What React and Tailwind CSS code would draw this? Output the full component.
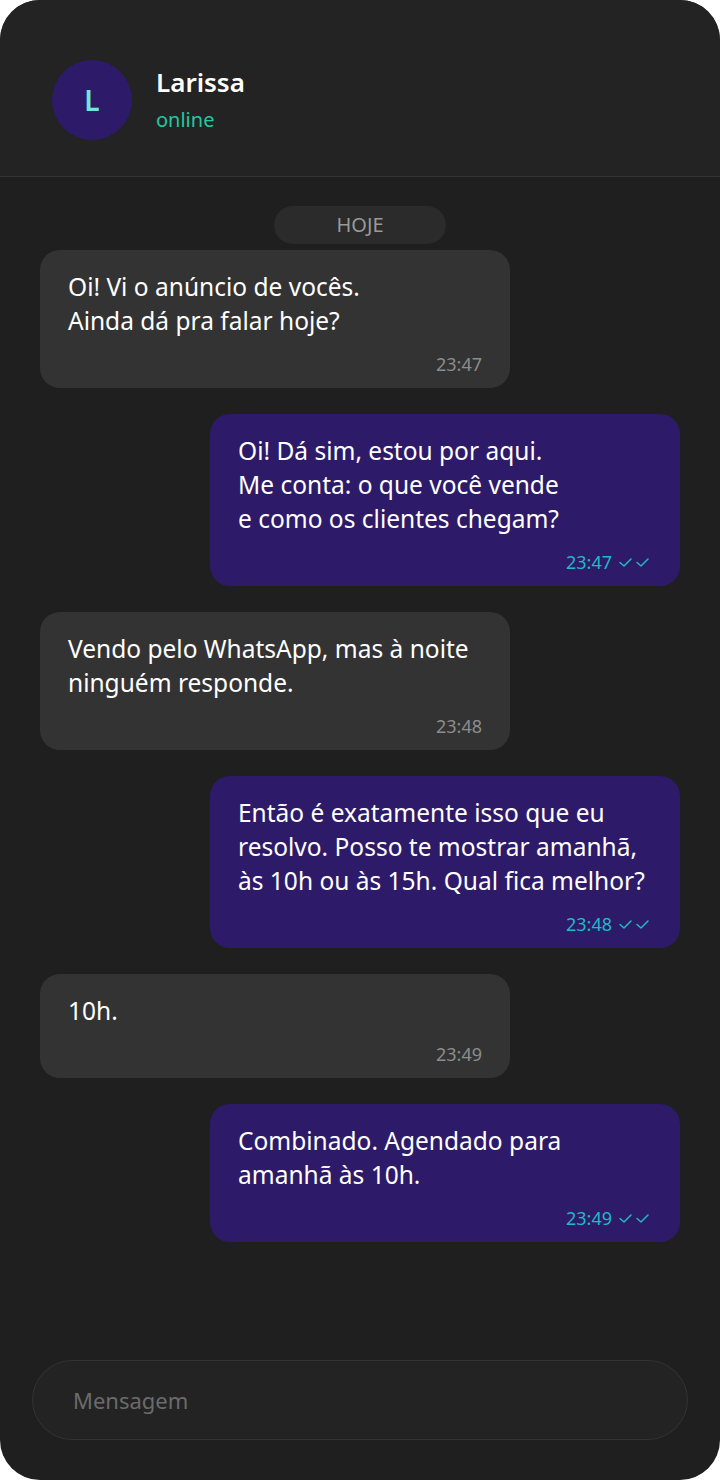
import React from 'react'

const messages = [
  { id: 1, mine: false, text: 'Oi! Vi o anúncio de vocês.\nAinda dá pra falar hoje?', time: '23:47' },
  { id: 2, mine: true, text: 'Oi! Dá sim, estou por aqui.\nMe conta: o que você vende\ne como os clientes chegam?', time: '23:47' },
  { id: 3, mine: false, text: 'Vendo pelo WhatsApp, mas à noite\nninguém responde.', time: '23:48' },
  { id: 4, mine: true, text: 'Então é exatamente isso que eu\nresolvo. Posso te mostrar amanhã,\nàs 10h ou às 15h. Qual fica melhor?', time: '23:48' },
  { id: 5, mine: false, text: '10h.', time: '23:49' },
  { id: 6, mine: true, text: 'Combinado. Agendado para\namanhã às 10h.', time: '23:49' },
]

function DoubleCheck(){
  return (
    <svg width="34" height="16" viewBox="0 0 34 16" fill="none" stroke="currentColor" strokeWidth="1.5" strokeLinecap="round" strokeLinejoin="round">
      <path d="M2 8.5l4 3.5 7-7" />
      <path d="M19 8.5l4 3.5 7-7" />
    </svg>
  )
}

function Bubble({ m }){
  return (
    <div className={`flex ${m.mine ? 'justify-end' : 'justify-start'}`}>
      <div className={`w-[470px] rounded-[20px] px-7 pt-5 pb-3 ${m.mine ? 'bg-[#2d1b69]' : 'bg-[#333333]'}`}>
        <p className="whitespace-pre text-[24.5px] leading-[34px] text-white">{m.text}</p>
        <div className={`mt-3.5 flex items-center justify-end gap-[6px] text-[18px] leading-6 ${m.mine ? 'text-[#22b8c4]' : 'text-[#8c8c8c]'}`}>
          <span>{m.time}</span>
          {m.mine && <DoubleCheck />}
        </div>
      </div>
    </div>
  )
}

export default function App(){
  return (
    <div className="h-[1480px] w-[720px] bg-white" style={{ fontFamily: '"Noto Sans", "Open Sans", sans-serif' }}>
      <div className="flex h-full flex-col overflow-hidden rounded-[40px] bg-[#1f1f1f]">
        <header className="flex items-start gap-6 border-b border-[#333333] bg-[#232323] px-[52px] pt-[60px] pb-9">
          <div className="flex h-20 w-20 shrink-0 items-center justify-center rounded-full bg-[#2d1b69] text-[28px] font-semibold text-[#6ee7d8]">L</div>
          <div className="pt-[4px]">
            <div className="text-[26px] font-semibold leading-9 text-white">Larissa</div>
            <div className="mt-[6px] text-[20px] leading-7 text-[#20c9a0]">online</div>
          </div>
        </header>

        <main className="flex flex-1 flex-col px-10 pt-[29px]">
          <div className="mb-1.5 flex justify-center">
            <span className="flex h-[38px] w-[172px] items-center justify-center rounded-full bg-[#2b2b2b] text-[20px] text-[#9a9a9a]">HOJE</span>
          </div>
          <div className="flex flex-col gap-[26px]">
            {messages.map(m => <Bubble key={m.id} m={m} />)}
          </div>
        </main>

        <div className="px-8 pb-10">
          <div className="flex h-20 items-center rounded-full border border-[#333333] bg-[#232323] px-10 text-[22px] text-[#6b6b6b]">
            Mensagem
          </div>
        </div>
      </div>
    </div>
  )
}
